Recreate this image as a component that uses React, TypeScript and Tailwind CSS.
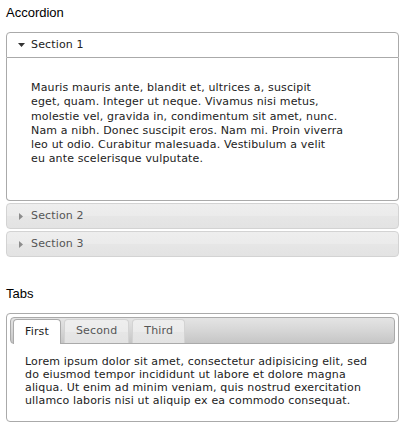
import React from "react";

const glass =
  "bg-[linear-gradient(to_bottom,#eeeeee_0%,#ebebeb_50%,#e6e6e6_52%,#e3e3e3_100%)]";

function DownArrow() {
  return (
    <svg width="7" height="4" viewBox="0 0 7 4" className="block">
      <polygon points="0,0 7,0 3.5,4" fill="#333333" />
    </svg>
  );
}

function RightArrow() {
  return (
    <svg width="4" height="7" viewBox="0 0 4 7" className="ml-px block">
      <polygon points="0,0 4,3.5 0,7" fill="#8c8c8c" />
    </svg>
  );
}

function Heading({ children }: { children: React.ReactNode }) {
  return (
    <h2 className="h-[15px] text-[13px] leading-[15px] text-black font-['Liberation_Sans',Arial,sans-serif] font-normal">
      {children}
    </h2>
  );
}

export default function App() {
  const verdana = "font-['DejaVu_Sans',Verdana,sans-serif] tracking-[0.15px]";

  return (
    <div className="w-[403px] h-[427px] bg-white pl-[6px] pr-[4px] pt-[5px]">
      <Heading>Accordion</Heading>

      {/* Accordion */}
      <div className={`mt-[12px] text-[11px] leading-[1.3] ${verdana}`}>
        <div className="h-[26px] flex items-center pl-[11px] border border-[#aaaaaa] rounded-t-[4px] bg-white text-[#212121]">
          <span className="w-[13px] flex items-center">
            <DownArrow />
          </span>
          Section 1
        </div>
        <div className="h-[143px] border border-t-0 border-[#aaaaaa] rounded-b-[4px] bg-white text-[#222222] px-[24px] pt-[23px]">
          <p>
            Mauris mauris ante, blandit et, ultrices a, suscipit
            <br />
            eget, quam. Integer ut neque. Vivamus nisi metus,
            <br />
            molestie vel, gravida in, condimentum sit amet, nunc.
            <br />
            Nam a nibh. Donec suscipit eros. Nam mi. Proin viverra
            <br />
            leo ut odio. Curabitur malesuada. Vestibulum a velit
            <br />
            eu ante scelerisque vulputate.
          </p>
        </div>
        {["Section 2", "Section 3"].map((s) => (
          <div
            key={s}
            className={`mt-[2px] h-[26px] flex items-center pl-[11px] border border-[#d3d3d3] rounded-[4px] ${glass} text-[#555555]`}
          >
            <span className="w-[13px] flex items-center">
              <RightArrow />
            </span>
            {s}
          </div>
        ))}
      </div>

      <div className="mt-[29px]">
        <Heading>Tabs</Heading>
      </div>

      {/* Tabs */}
      <div
        className={`mt-[12px] border border-[#aaaaaa] rounded-[4px] bg-white p-[3px] text-[11px] ${verdana}`}
      >
        <div className="h-[27px] flex items-start gap-[3px] pl-[2px] pt-px border border-[#aaaaaa] rounded-[4px] bg-[linear-gradient(to_bottom,#e4e4e4_0%,#d6d6d6_50%,#c6c6c6_100%)]">
          <div className="h-[25px] flex items-center px-[11px] border border-b-0 border-[#aaaaaa] rounded-t-[4px] bg-white text-[#212121] relative z-10">
            First
          </div>
          {["Second", "Third"].map((t) => (
            <div
              key={t}
              className={`h-[24px] flex items-center px-[11px] border border-b-0 border-[#d3d3d3] rounded-t-[4px] ${glass} text-[#555555]`}
            >
              {t}
            </div>
          ))}
        </div>
        <div className="px-[15px] pt-[11px] pb-[11px] leading-[13px] text-[#222222]">
          Lorem ipsum dolor sit amet, consectetur adipisicing elit, sed
          <br />
          do eiusmod tempor incididunt ut labore et dolore magna
          <br />
          aliqua. Ut enim ad minim veniam, quis nostrud exercitation
          <br />
          ullamco laboris nisi ut aliquip ex ea commodo consequat.
        </div>
      </div>
    </div>
  );
}
